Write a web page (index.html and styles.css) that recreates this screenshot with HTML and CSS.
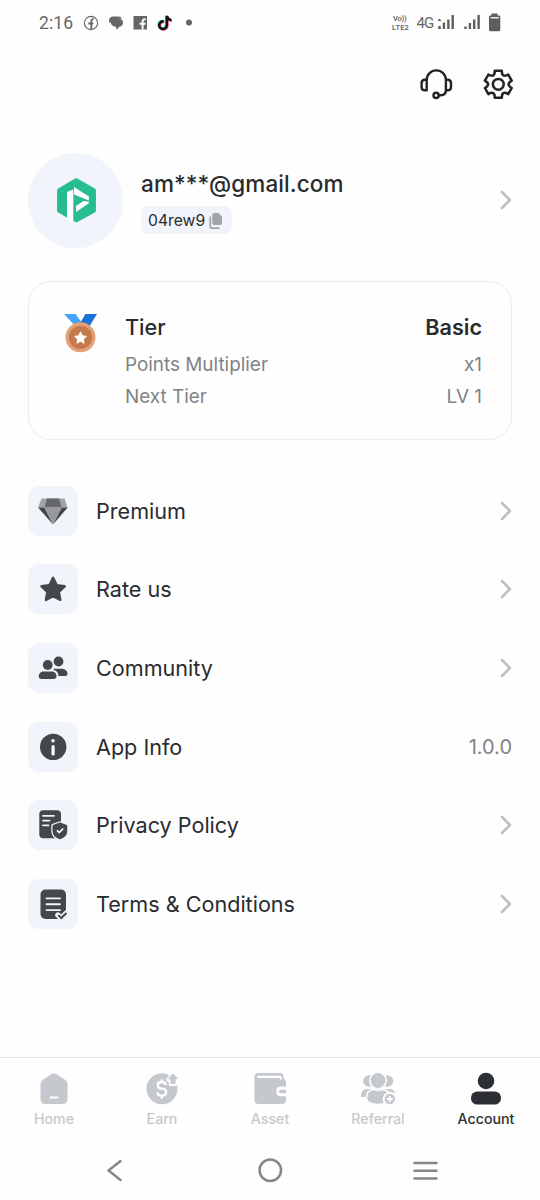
FILE: index.html
```html
<!DOCTYPE html>
<html lang="en">
<head>
<meta charset="utf-8">
<title>Account</title>
<link rel="stylesheet" href="styles.css">
</head>
<body>
<div class="screen">
  <div class="status">
    <span class="clock">2:16</span>
    <svg class="status-apps" width="116" height="22" viewBox="80 12 116 22">
      <circle cx="91" cy="23" r="6.6" fill="none" stroke="#666" stroke-width="1.1"/>
      <path d="M91.3 29v-8q0-2 2.4-1.9M88.300 23.500h5" fill="none" stroke="#666" stroke-width="1.8"/>
      <path d="M109 21q0-4.500 4.500-4.500h5q2.500 0 3.500 2l-9 .5-3 4q-1-.7-1-2z" fill="#666"/>
      <path d="M114.500 18.300h3.500c7 1 6 7.500 1.500 8.500l-2.800 3-.9-3c-6.500-1-6.500-7.500-1.300-8.500z" fill="#666"/>
      <path d="M133.500 16h13.500v13.500h-13.500z" fill="#666"/>
      <path d="M142.600 29.500v-8.200q0-2.200 3-2M139.500 23.800h6" fill="none" stroke="#fff" stroke-width="1.900"/>
      <g fill="none" stroke-width="2.500">
        <path d="M163.600 21.400a3.800 3.800 0 1 0 3.200 3.800v-9.200q.8 3.700 4.500 4.200" stroke="#35e0dc" transform="translate(-.7 -.4)"/>
        <path d="M163.600 21.400a3.800 3.800 0 1 0 3.200 3.800v-9.200q.8 3.700 4.500 4.200" stroke="#f43660" transform="translate(.6 .5)"/>
        <path d="M163.600 21.400a3.800 3.800 0 1 0 3.200 3.800v-9.200q.8 3.700 4.500 4.200" stroke="#111"/>
      </g>
      <circle cx="189" cy="22.500" r="3" fill="#666"/>
    </svg>
    <div class="volte"><span class="vo">Vo))</span><span>LTE2</span></div>
    <span class="net">4G</span>
    <svg class="signals" width="66" height="22" viewBox="436 12 66 22">
      <g fill="#5d5d5d">
        <path d="M437.500 21l2-2.600 2 2.600zM438.300 26h2.500v3h-2.500zM442.800 22.500h2.300v6.500h-2.300zM447.200 19.500h2.300v9.500h-2.300zM451.500 15h2.400v14h-2.400z"/>
        <path d="M464.300 26.500h2.400v2.500h-2.400zM468.700 23h2.400v6h-2.400zM473 19.500h2.400v9.500h-2.400zM477.400 15h2.400v14h-2.400z"/>
        <path d="M491.500 13.500h6v2h1.500q1.300 0 1.300 1.300v13q0 1.400-1.300 1.400h-8.700q-1.300 0-1.300-1.400v-13q0-1.300 1.300-1.300h1.200z"/>
      </g>
      <path d="M490.500 17.800h8.300" stroke="#fff" stroke-width="1.300"/>
    </svg>
  </div>

  <div class="actions">
    <svg width="36" height="36" viewBox="418 66 36 36" fill="none" stroke="#202327" stroke-width="2.400" stroke-linejoin="round" stroke-linecap="round">
      <path d="M426.700 90.300v-10.300a9.600 9.600 0 0 1 19.200 0v10.300M426.700 79.800h-1.700q-3.400 0-3.400 3.400v3.700q0 3.400 3.400 3.400h1.700zM445.900 79.800h1.700q3.400 0 3.400 3.400v3.700q0 3.400-3.400 3.400h-1.700zM445.900 90.300q0 4.900-5 4.900h-2"/>
      <circle cx="436.100" cy="95.400" r="2.600"/>
    </svg>
    <svg width="36" height="36" viewBox="-18.300 -18.300 36 36" fill="none" stroke="#202327" stroke-width="2.500" stroke-linejoin="round">
      <path d="M-3.500-13.500H3.500C3.500-8.500 5.600-7.300 9.900-9.800L13.400-3.700C9.100-1.200 9.100 1.200 13.400 3.700L9.900 9.800C5.600 7.300 3.500 8.500 3.500 13.500H-3.500C-3.500 8.500-5.600 7.300-9.900 9.800L-13.400 3.700C-9.100 1.200-9.100-1.200-13.400-3.700L-9.900-9.800C-5.600-7.300-3.500-8.500-3.500-13.500z"/>
      <circle r="5.400"/>
    </svg>
  </div>

  <div class="profile">
    <div class="avatar">
      <svg width="44" height="48" viewBox="54 176 44 48">
        <path d="M76.300 180.500L93.700 190.500V210.500L76.300 220 74 219 59.300 210.500V190.500z" fill="#27bd91" stroke="#27bd91" stroke-width="4.500" stroke-linejoin="round"/>
        <path d="M67 192l6.300-2.600v34h-2l-4.300-4z" fill="#fff"/>
        <path d="M74 187L88.900 196.500V200.500L74 194.500z" fill="#fff"/>
        <path d="M76 206L83.500 201 88.900 201.800V203.200L76 212z" fill="#fff"/>
      </svg>
    </div>
    <div class="who">
      <div class="mail">am***@gmail.com</div>
      <div class="code"><span>04rew9</span>
        <svg width="14" height="17" viewBox="209 211 14 17"><path d="M214 212h4.500l3.500 3.700v6.600q0 1.700-1.700 1.700h-6.300q-1.700 0-1.700-1.700v-8.600q0-1.700 1.700-1.700z" fill="#a2a4a8"/><path d="M210.300 215.500v10q0 1.700 1.700 1.700h7.500" fill="none" stroke="#a2a4a8" stroke-width="1.800"/></svg>
      </div>
    </div>
    <svg class="chev" viewBox="0 0 12 20"><path d="M2 2L10 10 2 18"/></svg>
  </div>

  <div class="card">
    <svg width="36" height="42" viewBox="62 312 36 42">
      <path d="M64 314h11.500l8 11-7 2.500z" fill="#42a5f5"/><path d="M85.500 314H97l-8 13-9.500-3z" fill="#1b72d8"/>
      <circle cx="80.500" cy="337.300" r="15" fill="#e3a076"/><circle cx="80.500" cy="337.300" r="11.600" fill="#c57a4d"/>
      <path d="M80.500 332.300l1.700 3.500 3.800.6-2.800 2.700.7 3.900-3.400-1.900-3.400 1.900.7-3.900-2.800-2.700 3.800-.6z" fill="#fff" stroke="#fff" stroke-width="1.200" stroke-linejoin="round"/>
    </svg>
    <div class="tiers">
      <div class="tier-head"><span>Tier</span><b>Basic</b></div>
      <div class="tier-row"><span>Points Multiplier</span><span>x1</span></div>
      <div class="tier-row"><span>Next Tier</span><span>LV 1</span></div>
    </div>
  </div>

  <div class="menu">
    <div class="item"><div class="tile"><svg viewBox="28.500 485.500 50 50">
      <path d="M42 498h23l3 9H38.500z" fill="#a1a3a6"/><path d="M47.500 498h12l2.500 9H45z" fill="#65676a"/><path d="M38.500 507H45l8.500 17z" fill="#45484b"/><path d="M68.200 507H62l-8.500 17z" fill="#45484b"/><path d="M45 507h17l-8.500 17z" fill="#98999c"/></svg></div>
      <span class="label">Premium</span><svg class="chev" viewBox="0 0 12 20"><path d="M2 2L10 10 2 18"/></svg></div>
    <div class="item"><div class="tile"><svg viewBox="28.500 564 50 50">
      <path d="M53.600 577.800l3.600 7.300 8 1.200-5.800 5.600 1.400 8-7.200-3.800-7.200 3.800 1.400-8-5.800-5.600 8-1.200z" fill="#45484b" stroke="#45484b" stroke-width="2.400" stroke-linejoin="round"/></svg></div>
      <span class="label">Rate us</span><svg class="chev" viewBox="0 0 12 20"><path d="M2 2L10 10 2 18"/></svg></div>
    <div class="item"><div class="tile"><svg viewBox="28.500 643 50 50" fill="#45484b">
      <circle cx="48.200" cy="665" r="4.900"/><circle cx="59" cy="661.500" r="4.900"/>
      <path d="M44.500 671.500h7.500c3 0 5 2 5 4.600q0 2.900-3 2.900H42.200q-3 0-3-2.900c0-2.600 2.200-4.600 5.300-4.600z"/>
      <path d="M54.500 668.700h7.500c3.500 0 6 2.200 6 5q0 2.300-2.800 2.300h-6.300c0-3.300-1.600-5.500-4.800-6.100z"/></svg></div>
      <span class="label">Community</span><svg class="chev" viewBox="0 0 12 20"><path d="M2 2L10 10 2 18"/></svg></div>
    <div class="item"><div class="tile"><svg viewBox="28.500 721.800 50 50">
      <circle cx="53.700" cy="746.700" r="13.200" fill="#45484b"/><circle cx="53.500" cy="740.500" r="1.700" fill="#fff"/><path d="M53.600 746.500v7.300" stroke="#fff" stroke-width="3.200" stroke-linecap="round"/></svg></div>
      <span class="label">App Info</span><span class="version">1.0.0</span></div>
    <div class="item"><div class="tile"><svg viewBox="28.500 800.700 50 50">
      <rect x="39.800" y="811" width="21.700" height="28" rx="4" fill="#45484b"/>
      <path d="M43.500 816.500h11M43.500 821.300h6.500M43.500 826h5.500" stroke="#f1f4fa" stroke-width="1.800" stroke-linecap="round"/>
      <path d="M60.400 824l6.600 2.400v5.300c0 4-3 6.300-6.600 7.500-3.600-1.200-6.600-3.500-6.600-7.500v-5.300z" fill="#f1f4fa" stroke="#f1f4fa" stroke-width="4" stroke-linejoin="round"/><path d="M60.400 824l6.600 2.400v5.300c0 4-3 6.300-6.600 7.500-3.600-1.200-6.600-3.500-6.600-7.500v-5.300z" fill="#45484b" stroke="#45484b" stroke-width="1.500" stroke-linejoin="round"/>
      <path d="M57.500 831l2.200 2.200 4-4" fill="none" stroke="#fff" stroke-width="1.700"/></svg></div>
      <span class="label">Privacy Policy</span><svg class="chev" viewBox="0 0 12 20"><path d="M2 2L10 10 2 18"/></svg></div>
    <div class="item"><div class="tile"><svg viewBox="28.500 879.400 50 50">
      <rect x="41" y="890" width="25.500" height="29.300" rx="5" fill="#45484b"/>
      <path d="M47 898.800h13.500M47 904.700h13.500M47 910.500h13.500" stroke="#f1f4fa" stroke-width="1.900" stroke-linecap="round"/>
      <path d="M58.500 915.500l3.300 3.200 5.500-5.500" fill="none" stroke="#f1f4fa" stroke-width="5.500" stroke-linecap="round"/><path d="M58.800 915.500l3 2.900 5.200-5" fill="none" stroke="#45484b" stroke-width="2"/></svg></div>
      <span class="label">Terms &amp; Conditions</span><svg class="chev" viewBox="0 0 12 20"><path d="M2 2L10 10 2 18"/></svg></div>
  </div>

  <div class="tabs">
    <div class="tab"><svg viewBox="36 1070 36 36">
      <path d="M51 1074.500q3-1.900 6 0l8.500 5.500q2 1.500 2 4v15q0 5-5 5h-17q-5 0-5-5v-15q0-2.500 2-4z" fill="#c5c8cd"/><path d="M50.500 1097.500h7" stroke="#fff" stroke-width="2" stroke-linecap="round"/></svg><span>Home</span></div>
    <div class="tab"><svg viewBox="144 1070 36 36">
      <circle cx="162" cy="1088.700" r="15.500" fill="#c5c8cd"/>
      <path d="M173 1075l4 4.500h-2.200v4h-3.600v-4H169z" fill="#fefefe" stroke="#fefefe" stroke-width="5" stroke-linejoin="round"/>
      <path d="M173 1074.200l3.900 4.300h-2v4.700h-3.800v-4.700h-2z" fill="#c5c8cd" stroke="#c5c8cd" stroke-width="1.400" stroke-linejoin="round"/>
      <path d="M166 1085q-.7-3-4.200-3c-5.300 0-5.300 6.300 0 6.600 5.800.2 5.800 7 0 7-3.500 0-4.500-2-4.500-3.400M161.800 1079.500v3M161.800 1095v3.500" fill="none" stroke="#fff" stroke-width="2.400"/></svg><span>Earn</span></div>
    <div class="tab"><svg viewBox="252 1070 36 36">
      <path d="M258 1073h22q3.500 0 3.500 3.500v2.200q2.500.5 2.500 3.500v17.500q0 4.300-4.300 4.300h-23q-4.300 0-4.300-4.300v-23.200q0-3.500 3.600-3.500z" fill="#c5c8cd"/>
      <path d="M258 1076.800h21.500q1.300 0 1.300 2" fill="none" stroke="#fff" stroke-width="2.200" stroke-linecap="round"/>
      <path d="M287 1086.500h-6q-4.700 0-4.700 4.900t4.700 4.900h6z" fill="#fefefe"/><path d="M286 1089.700h-5q-2 0-2 1.800t2 1.800h5z" fill="#c5c8cd"/></svg><span>Asset</span></div>
    <div class="tab"><svg viewBox="360 1070 36 36" fill="#c5c8cd">
      <circle cx="368.900" cy="1081" r="5.800"/><circle cx="387.500" cy="1081" r="5.800"/>
      <path d="M361 1096q0-7 6-7h22q5 0 6 4l-5 3h-24l-.5 1h-4.500z"/>
      <circle cx="378" cy="1080.500" r="8.200" stroke="#fefefe" stroke-width="1.600"/>
      <path d="M366.300 1098.500q0-8.500 7.500-9l4.200 1 4.500-1q7.500.5 7.500 9-1 6-11.800 6t-11.900-6z" stroke="#fefefe" stroke-width="1.600"/>
      <circle cx="389.800" cy="1099" r="6.200" stroke="#fefefe" stroke-width="2"/><path d="M389.800 1096v6M386.800 1099h6" stroke="#fff" stroke-width="1.800"/></svg><span>Referral</span></div>
    <div class="tab active"><svg viewBox="468 1070 36 36" fill="#2c2f34">
      <circle cx="486" cy="1081" r="8.300"/><rect x="471" y="1091.500" width="30" height="13" rx="6.300"/></svg><span>Account</span></div>
  </div>

  <div class="sysnav">
    <svg width="332" height="26" viewBox="107 1157 332 26" fill="none" stroke="#868686" stroke-width="2.500" stroke-linecap="round" stroke-linejoin="round"><path d="M120.500 1161l-12 9.500 12 9.500"/><circle cx="270.300" cy="1170.300" r="10.700"/><path d="M414.500 1163h22M414.500 1170.800h22M414.500 1178.600h22"/></svg>
  </div>
</div>
</body>
</html>
```
FILE: styles.css
```css
* { box-sizing: border-box; }
body { margin: 0; background: #fefefe; font-family: Inter, "Liberation Sans", sans-serif; color: #292b2f; }
svg { display: block; flex: none; }
.screen { width: 540px; height: 1200px; display: flex; flex-direction: column; overflow: hidden; }

.status { height: 46px; display: flex; align-items: center; padding-left: 39px; color: #666; font-family: Roboto, sans-serif; }
.clock { width: 41px; font-size: 17.5px; letter-spacing: .1px; }
.status-apps { margin-right: 196px; }
.volte { width: 24.500px; display: flex; flex-direction: column; font-size: 7.500px; line-height: 9px; font-weight: 600; letter-spacing: .2px; }
.vo { padding-left: 1px; letter-spacing: -.2px; }
.net { width: 19.500px; font-size: 15px; letter-spacing: -1px; }

.actions { height: 76px; display: flex; justify-content: flex-end; align-items: center; gap: 26px; padding-right: 24px; }

.profile { height: 95px; margin: 30.500px 28px 0 28px; display: flex; align-items: center; }
.avatar { width: 95px; height: 95px; border-radius: 50%; background: #f1f4fa; display: flex; align-items: center; justify-content: center; }
.who { flex: 1; padding: 4px 0 0 18px; display: flex; flex-direction: column; align-items: flex-start; gap: 8px; }
.mail { font-size: 22.500px; line-height: 28px; font-weight: 500; letter-spacing: .1px; }
.code { height: 28px; width: 91px; padding-left: 7px; border-radius: 8px; background: #f1f4fa; display: flex; align-items: center; gap: 4px; font-size: 15.700px; }

.chev { width: 12px; height: 20px; margin-left: auto; fill: none; stroke: #bdbec0; stroke-width: 2.500; stroke-linecap: round; stroke-linejoin: round; }

.card { height: 159px; margin: 33.500px 28px 0; padding: 30px 29px 0 33px; border: 1.500px solid #ececee; border-radius: 23px; display: flex; gap: 27px; }
.tiers { flex: 1; padding-top: 1px; }
.tier-head, .tier-row { display: flex; justify-content: space-between; }
.tier-head { font-size: 21.600px; line-height: 28px; font-weight: 500; margin-bottom: 8px; }
.tier-head b { font-weight: 600; }
.tier-row { font-size: 18.900px; line-height: 31.500px; color: #808286; }

.menu { margin: 45.500px 28px 0; display: flex; flex-direction: column; gap: 28.700px; }
.item { height: 50px; display: flex; align-items: center; }
.tile { width: 50px; height: 50px; border-radius: 11px; background: #f1f4fa; margin-right: 18px; }
.label { font-size: 21.600px; }
.version { margin-left: auto; font-size: 20px; color: #808286; }

.tabs { height: 83px; margin-top: auto; border-top: 1.500px solid #e4e8ea; display: grid; grid-template-columns: repeat(5, 1fr); padding-top: 12px; }
.tab { display: flex; flex-direction: column; align-items: center; gap: 4px; font-size: 14.200px; line-height: 18px; font-weight: 500; color: #c5c8cd; }
.tab svg { width: 36px; height: 36px; }
.active { color: #2c2f34; }

.sysnav { height: 60px; padding: 17px 0 0 107px; }
```
